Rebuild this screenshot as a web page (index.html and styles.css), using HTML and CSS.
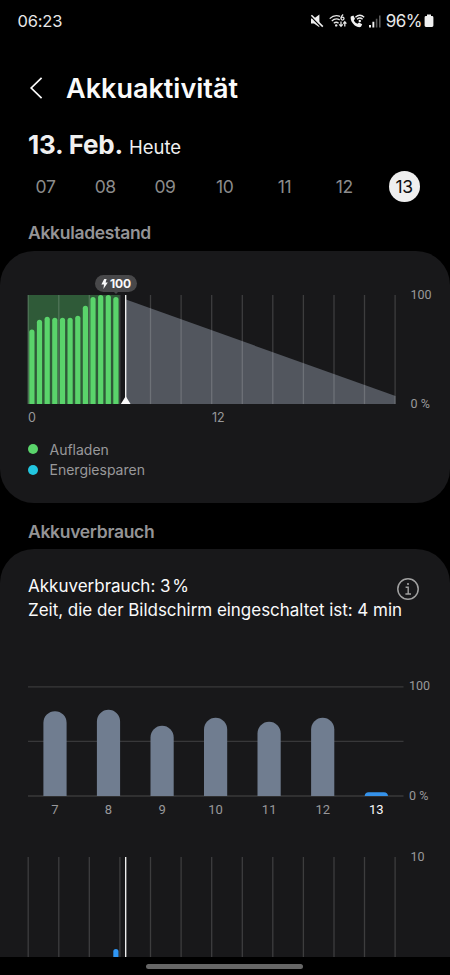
FILE: index.html
```html
<!DOCTYPE html>
<html lang="de">
<head>
    <meta charset="UTF-8">
    <title>Akkuaktivität</title>
    <link rel="stylesheet" href="styles.css">
</head>
<body>
    <div id="app">
        <div class="status-bar">
            <span class="time">06:23</span>
            <div class="status-icons">
                <svg class="icon-mute" width="14" height="14" viewBox="0 0 14 14">
                    <path d="M1 4.4H4L9.4 .6V13.2L4 9.6H1Z" fill="#f0f0f0"/>
                    <path d="M.4 2L11.6 13.4" stroke="#000" stroke-width="1.4"/>
                    <path d="M1.4 1.2L12.8 12.6" stroke="#f0f0f0" stroke-width="1.6"/>
                </svg>
                <svg class="icon-wifi" width="18" height="14" viewBox="0 0 18 14">
                    <g fill="none" stroke="#e6e6e6" stroke-width="1.3">
                        <path d="M.7 4.6Q5.4 .2 11 2.4"/>
                        <path d="M2.8 7Q6.6 3.4 10.8 6"/>
                        <path d="M4.8 9.3Q7.2 7.2 9.6 9.3"/>
                        <path d="M14.2 .5Q12 2 12 4.2"/>
                        <circle cx="13.5" cy="4.6" r="1.5"/>
                        <path d="M12 7.6V12M10.2 10.4L12 12.4L13.8 10.4M15.8 12.6V8.2M14.2 9.6L15.8 7.8L17.4 9.6"/>
                    </g>
                    <circle cx="7.2" cy="11.4" r="1.2" fill="#e6e6e6"/>
                </svg>
                <svg class="icon-call" width="15" height="14" viewBox="0 0 15 14">
                    <path d="M.8 2.6L3.4 1.4L5 4.8L3.8 6.4Q4.8 8.6 7.4 9.8L9 8.4L12.2 10.2L11 12.8Q8.4 14 4.8 11.4Q-.2 7.2 .8 2.6Z" fill="#f0f0f0"/>
                    <g fill="none" stroke="#f0f0f0" stroke-width="1.3">
                        <path d="M5.4 3.2Q9.8 -.6 14.2 3.2"/>
                        <path d="M7 5.2Q9.8 2.8 12.6 5.2"/>
                    </g>
                    <circle cx="9.8" cy="7" r="1.2" fill="#f0f0f0"/>
                </svg>
                <svg class="icon-signal" width="12" height="13" viewBox="0 0 12 13">
                    <path d="M0 10h2v2.5h-2zM3.4 6.8h1.9v5.7h-1.9z" fill="#f0f0f0"/>
                    <path d="M6.8 3.8h1.6v8.7h-1.6zM10 .5h1.6v12h-1.6z" fill="#5a5a5a"/>
                </svg>
                <span class="percent">96%</span>
                <svg class="icon-battery" width="10" height="14" viewBox="0 0 10 14">
                    <path d="M3 .5H7V2H8Q9.4 2 9.4 3.4V11.6Q9.4 13 8 13H2Q.6 13 .6 11.6V3.4Q.6 2 2 2H3Z" fill="#f0f0f0"/>
                </svg>
            </div>
        </div>
        <div class="header">
            <svg class="back" width="14" height="24" viewBox="0 0 14 24">
                <path d="M12.6 1.8L2.2 12L12.6 22.2" fill="none" stroke="#fafafa" stroke-width="1.7"/>
            </svg>
            <h1>Akkuaktivität</h1>
        </div>
        <div class="date">
            <b>13. Feb.</b>
            <span>Heute</span>
        </div>
        <ul class="days">
            <li>07</li>
            <li>08</li>
            <li>09</li>
            <li>10</li>
            <li>11</li>
            <li>12</li>
            <li class="active">13</li>
        </ul>

        <h2>Akkuladestand</h2>
        <div class="card level">
            <div class="chart">
                <svg width="369" height="109" viewBox="27 295 369 109">
                    <rect x="27.7" y="295" width="91.6" height="109" fill="#2f5a38"/>
                    <path d="M126 299.6L395.5 396V404H126Z" fill="#52565e"/>
                    <path class="grid" d="M28.2 295v109M58.8 295v109M89.3 295v109M119.9 295v109M150.5 295v109M181.1 295v109M211.7 295v109M242.3 295v109M272.8 295v109M303.4 295v109M334 295v109M364.5 295v109M395.1 295v109"/>
                    <g fill="#5ad46b">
                        <rect x="29.3" y="329.6" width="5.2" height="80" rx="2.6"/>
                        <rect x="36.9" y="319.7" width="5.2" height="90" rx="2.6"/>
                        <rect x="44.6" y="316.7" width="5.2" height="93" rx="2.6"/>
                        <rect x="52.2" y="317.7" width="5.2" height="92" rx="2.6"/>
                        <rect x="59.9" y="317.7" width="5.2" height="92" rx="2.6"/>
                        <rect x="67.5" y="317.7" width="5.2" height="92" rx="2.6"/>
                        <rect x="75.2" y="315.7" width="5.2" height="94" rx="2.6"/>
                        <rect x="82.8" y="305.7" width="5.2" height="104" rx="2.6"/>
                        <rect x="90.4" y="297" width="5.2" height="113" rx="2.6"/>
                        <rect x="98.1" y="295" width="5.2" height="115" rx="2.6"/>
                        <rect x="105.7" y="295" width="5.2" height="115" rx="2.6"/>
                        <rect x="113.3" y="297" width="5.2" height="113" rx="2.6"/>
                    </g>
                    <path d="M125.7 295v109" stroke="#fafafa" stroke-width="1.3"/>
                    <path d="M125.7 396.3L130.6 404H120.8Z" fill="#fafafa"/>
                </svg>
                <div class="axis">
                    <span>100</span>
                    <span>0 %</span>
                </div>
                <div class="badge">
                    <svg width="7" height="10" viewBox="0 0 7 10">
                        <path d="M3.2 0H5.6L4.6 3.6H6.8L2.4 10L3 5.6H.4Z" fill="#fafafa"/>
                    </svg>
                    <span>100</span>
                </div>
            </div>
            <div class="hours">
                <span>0</span>
                <span>12</span>
            </div>
            <ul class="legend">
                <li><i class="dot green"></i>Aufladen</li>
                <li><i class="dot cyan"></i>Energiesparen</li>
            </ul>
        </div>

        <h2 class="second">Akkuverbrauch</h2>
        <div class="card usage">
            <div class="summary">
                <p class="used">Akkuverbrauch: 3&#8202;%</p>
                <p class="screen">Zeit, die der Bildschirm eingeschaltet ist: 4 min</p>
                <svg class="info" width="24" height="24" viewBox="0 0 24 24">
                    <circle cx="12" cy="12" r="10.2" fill="none" stroke="#a0a0a0" stroke-width="1.5"/>
                    <path d="M9.6 10.2H12.2V17M9.4 17H15" fill="none" stroke="#a0a0a0" stroke-width="1.4"/>
                    <circle cx="12" cy="7" r="1.1" fill="#a0a0a0"/>
                </svg>
            </div>
            <div class="week">
                <svg width="376" height="111" viewBox="28 685.5 376 111">
                    <path d="M28 686.3H403.5M28 740.9H403.5M28 795.5H403.5" stroke="#38383a" stroke-width="1.3"/>
                    <g fill="#707d90">
                        <path d="M43.4 795.5V722.3a11.6 11.6 0 0 1 23.2 0V795.5z"/>
                        <path d="M96.9 795.5V720.9a11.6 11.6 0 0 1 23.2 0V795.5z"/>
                        <path d="M150.5 795.5V736.9a11.6 11.6 0 0 1 23.2 0V795.5z"/>
                        <path d="M204 795.5V728.9a11.6 11.6 0 0 1 23.2 0V795.5z"/>
                        <path d="M257.5 795.5V732.9a11.6 11.6 0 0 1 23.2 0V795.5z"/>
                        <path d="M311.1 795.5V728.9a11.6 11.6 0 0 1 23.2 0V795.5z"/>
                    </g>
                    <path d="M364.7 795.5Q365 791.8 368.6 791.8H384Q387.6 791.8 388 795.5z" fill="#3592ea"/>
                </svg>
                <div class="axis">
                    <span>100</span>
                    <span>0 %</span>
                </div>
            </div>
            <ul class="week-days">
                <li>7</li>
                <li>8</li>
                <li>9</li>
                <li>10</li>
                <li>11</li>
                <li>12</li>
                <li class="active">13</li>
            </ul>
            <div class="hourly">
                <svg width="369" height="101" viewBox="27 857 369 101">
                    <path class="grid" d="M28.2 857v101M58.8 857v101M89.3 857v101M119.9 857v101M150.5 857v101M181.1 857v101M211.7 857v101M242.3 857v101M272.8 857v101M303.4 857v101M334 857v101M364.5 857v101M395.1 857v101"/>
                    <path d="M125.7 857v101" stroke="#fafafa" stroke-width="1.3"/>
                    <rect x="113.3" y="949" width="5.2" height="20" rx="2.6" fill="#2f96f5"/>
                </svg>
                <div class="axis">
                    <span>10</span>
                </div>
            </div>
        </div>
        <div class="nav-bar"><span></span></div>
    </div>
</body>
</html>
```

FILE: styles.css
```css
* {
  margin: 0px;
  padding: 0px;
  box-sizing: border-box;
}
html, body {
  height: 100%;
  background: #000;
}
ul, li {
  list-style: none;
}
svg {
  display: block;
  flex-shrink: 0;
}
#app {
  display: flex;
  flex-direction: column;
  width: 450px;
  height: 975px;
  overflow: hidden;
  white-space: nowrap;
  color: #fafafa;
  font-family: Inter, "Liberation Sans", sans-serif;
}
.status-bar {
  display: flex;
  flex-shrink: 0;
  justify-content: space-between;
  align-items: center;
  height: 45px;
  padding: 0px 16px 3px 17.5px;
  font-size: 16.5px;
  letter-spacing: -.2px;
  color: #e8e8e8;
}
.status-icons {
  display: flex;
  align-items: center;
}
.icon-mute {
  margin-right: 5px;
}
.icon-wifi {
  margin-right: 3px;
}
.icon-call {
  margin-right: 4px;
}
.icon-signal {
  margin-right: 5px;
}
.percent {
  font-size: 17px;
  letter-spacing: -.5px;
}
.icon-battery {
  margin-left: 2px;
}
.header {
  display: flex;
  flex-shrink: 0;
  align-items: center;
  height: 86px;
  padding-left: 29px;
}
.header h1 {
  margin-left: 23px;
  font-size: 27px;
  font-weight: 600;
}
.date {
  display: flex;
  flex-shrink: 0;
  align-items: baseline;
  gap: 6px;
  height: 33px;
  padding-left: 28px;
  line-height: 27px;
}
.date b {
  font-size: 26px;
  font-weight: 700;
  letter-spacing: -.2px;
  color: #f0f0f0;
}
.date span {
  font-size: 18.5px;
  color: #f0f0f0;
}
.days {
  display: flex;
  flex-shrink: 0;
  justify-content: space-between;
  align-items: center;
  height: 45px;
  padding: 0px 30.5px 0px 30px;
}
.days li {
  width: 31px;
  height: 31px;
  border-radius: 50%;
  line-height: 31px;
  text-align: center;
  font-size: 17.5px;
  letter-spacing: -.4px;
  color: #8c8c8c;
}
.days .active {
  background: #efefef;
  color: #111;
}
h2 {
  flex-shrink: 0;
  height: 41.5px;
  padding-left: 28px;
  line-height: 47px;
  font-size: 17.5px;
  font-weight: 600;
  letter-spacing: -.3px;
  color: #949496;
}
h2.second {
  height: 46px;
  line-height: 57px;
}
.card {
  flex-shrink: 0;
  width: 100%;
  border-radius: 34px;
  background: #18181a;
}
.level {
  height: 252.5px;
  padding: 44.5px 0px 0px 27px;
}
.chart, .week, .hourly {
  display: flex;
  position: relative;
}
.grid {
  fill: none;
  stroke: rgba(255, 255, 255, .16);
  stroke-width: 1.3;
}
.axis {
  display: flex;
  flex-direction: column;
  justify-content: space-between;
  margin: -8px 0px -8px 14.5px;
  font-family: Roboto, sans-serif;
  font-size: 12.5px;
  line-height: 16px;
  color: #98989a;
}
.badge {
  display: flex;
  position: absolute;
  left: 68px;
  top: -20px;
  align-items: center;
  justify-content: center;
  gap: 2px;
  width: 42px;
  height: 17px;
  border-radius: 9px;
  background: #48484a;
  font-size: 12px;
  font-weight: 700;
  letter-spacing: -.2px;
}
.badge::after {
  content: '';
  position: absolute;
  left: 19px;
  bottom: -2px;
  border: 2px solid transparent;
  border-top-color: #48484a;
  border-bottom: 0px;
}
.hours {
  display: grid;
  grid-template-columns: 184px 184px;
  height: 35px;
  padding-left: 1px;
  line-height: 28px;
  font-size: 12.5px;
  color: #98989a;
}
.legend li {
  display: flex;
  align-items: center;
  height: 20.5px;
  font-size: 14px;
  color: #98989a;
}
.dot {
  width: 10px;
  height: 10px;
  margin: 0px 11.5px 0px 1px;
  border-radius: 50%;
}
.green {
  background: #5ad46b;
}
.cyan {
  background: #22c6e0;
}
.usage {
  display: flex;
  flex: 1 0 0px;
  flex-direction: column;
  padding-top: 24.5px;
  border-radius: 34px 34px 0px 0px;
  overflow: hidden;
}
.summary {
  position: relative;
  flex-shrink: 0;
  height: 112px;
  padding-left: 28px;
  font-size: 17px;
  line-height: 24.7px;
}
.screen {
  letter-spacing: -.03px;
}
.info {
  position: absolute;
  left: 396px;
  top: 3.5px;
}
.week {
  flex-shrink: 0;
  padding-left: 28px;
}
.week .axis {
  margin: -8px 0px -7px 5px;
}
.week-days {
  display: grid;
  flex-shrink: 0;
  grid-template-columns: repeat(7, 53.55px);
  height: 60.5px;
  padding-left: 28.2px;
  line-height: 26px;
  text-align: center;
  font-family: Roboto, sans-serif;
  font-size: 13px;
  color: #98989a;
}
.week-days .active {
  color: #fafafa;
}
.hourly {
  flex-shrink: 0;
  padding-left: 27px;
}
.nav-bar {
  display: flex;
  flex-shrink: 0;
  height: 18px;
  padding: 7px 0px 0px 146px;
  background: #000;
}
.nav-bar span {
  width: 157px;
  height: 5px;
  border-radius: 3px;
  background: #666;
}
```
